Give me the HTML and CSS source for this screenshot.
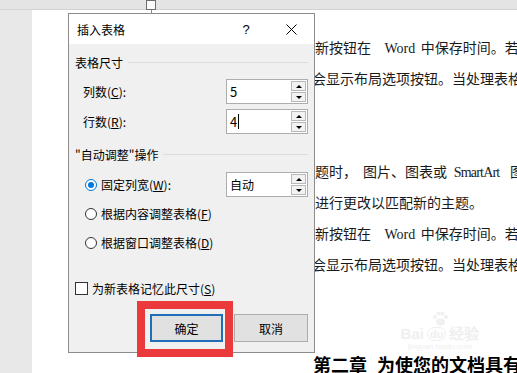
FILE: index.html
```html
<!DOCTYPE html>
<html lang="zh-CN">
<head>
<meta charset="utf-8">
<title>插入表格</title>
<link rel="stylesheet" href="styles.css">
</head>
<body>
<div class="topband"></div>
<div class="workspace">
  <div class="gutter"></div>
  <div class="page">
    <div class="doc">
      <div class="line">的新按钮在<span class="lat w1"> Word </span>中保存时间。若要更改</div>
      <div class="line shift">边会显示布局选项按钮。当处理表格时，单击</div>
      <div class="line"></div>
      <div class="line"></div>
      <div class="line">主题时<span class="wide">，</span>图片、图表或<span class="lat w2"> SmartArt </span>图形将会更改</div>
      <div class="line">会进行更改以匹配新的主题。</div>
      <div class="line">的新按钮在<span class="lat w1"> Word </span>中保存时间。若要更改</div>
      <div class="line shift">边会显示布局选项按钮。当处理表格时，单击</div>
      <div class="heading">第二章<span class="hgap"> </span>为使您的文档具有出色的外观</div>
    </div>
  </div>
</div>

<div class="handle"></div>

<div class="watermark">
  <svg class="paw" width="18" height="15" viewBox="0 0 18 15">
    <circle cx="4" cy="6" r="2" />
    <circle cx="7.5" cy="2.5" r="2" />
    <circle cx="11.5" cy="2.5" r="2" />
    <circle cx="15" cy="6" r="2" />
    <ellipse cx="9.5" cy="11" rx="4.5" ry="3.5" />
  </svg>
  <div class="wm-main"><span>Bai</span><span class="wm-du">du</span><span>经验</span></div>
  <div class="wm-url">jingyan.baidu.com</div>
</div>

<div class="dialog">
  <div class="titlebar">
    <span class="title">插入表格</span>
    <span class="help">?</span>
    <svg class="close" width="11" height="11" viewBox="0 0 11 11">
      <path d="M0.5 0.5 L10.5 10.5 M10.5 0.5 L0.5 10.5" stroke="#000" stroke-width="1" fill="none"/>
    </svg>
  </div>
  <div class="body">
    <div class="group-head first"><span>表格尺寸</span><span class="rule"></span></div>
    <div class="spin-row">
      <span>列数(<u>C</u>):</span>
      <div class="spin"><span class="val">5</span><span class="arrows"><span class="arr"><i class="up"></i></span><span class="arr"><i class="down"></i></span></span></div>
    </div>
    <div class="spin-row second">
      <span>行数(<u>R</u>):</span>
      <div class="spin"><span class="val">4<span class="caret"></span></span><span class="arrows"><span class="arr"><i class="up"></i></span><span class="arr"><i class="down"></i></span></span></div>
    </div>
    <div class="group-head second-head"><span>"自动调整"操作</span><span class="rule"></span></div>
    <div class="radios">
      <div class="radio-row">
        <span class="radio on"></span><span class="rlabel">固定列宽(<u>W</u>):</span>
        <div class="spin auto"><span class="val">自动</span><span class="arrows"><span class="arr"><i class="up"></i></span><span class="arr"><i class="down"></i></span></span></div>
      </div>
      <div class="radio-row">
        <span class="radio"></span><span class="rlabel">根据内容调整表格(<u>F</u>)</span>
      </div>
      <div class="radio-row">
        <span class="radio"></span><span class="rlabel">根据窗口调整表格(<u>D</u>)</span>
      </div>
    </div>
    <div class="check-row"><span class="check"></span><span class="clabel">为新表格记忆此尺寸(<u>S</u>)</span></div>
    <div class="buttons">
      <div class="btn ok">确定</div>
      <div class="btn cancel">取消</div>
    </div>
  </div>
</div>

<div class="highlight"></div>
</body>
</html>
```

FILE: styles.css
```css
html, body {
  margin: 0;
  padding: 0;
  width: 517px;
  height: 373px;
  overflow: hidden;
}
body {
  background: #e8e8e8;
  position: relative;
  font-family: "Noto Sans CJK SC", "Noto Sans", sans-serif;
}
.topband {
  height: 9px;
  background: #e4e4e4;
  border-bottom: 1px solid #d2d2d2;
}
.workspace {
  display: flex;
  height: 363px;
}
.gutter {
  width: 32px;
  flex: none;
  background: #e8e8e8;
}
.page {
  flex: 1;
  background: #fff;
  overflow: hidden;
  padding-top: 22px;
}
.doc {
  margin-left: 269px;
  font-size: 14px;
  color: #1a1a1a;
}
.line {
  height: 31px;
  line-height: 31px;
  white-space: nowrap;
}
.line.shift { text-indent: -3px; }
.lat { font-family: "Liberation Serif", serif; }
.w1 { margin: 0 2px 0 10px; }
.w2 { margin: 0 8px 0 4px; letter-spacing: -0.8px; }
.wide { margin-right: 6px; }
.heading {
  margin-top: 75px;
  margin-left: 12px;
  font-size: 18px;
  line-height: 18px;
  font-weight: 700;
  color: #000;
  white-space: nowrap;
}
.hgap { display: inline-block; width: 10px; }

.handle {
  position: absolute;
  left: 146px;
  top: 0;
  width: 8px;
  height: 8px;
  border: 1px solid #6e6e6e;
  background: #fafafa;
}
.handle::after {
  content: "";
  position: absolute;
  left: 4px;
  top: 9px;
  width: 1px;
  height: 4px;
  background: #8a8a8a;
}

.watermark {
  position: absolute;
  left: 388px;
  top: 311px;
  width: 104px;
  display: flex;
  flex-direction: column;
  align-items: center;
  color: #efefef;
}
.paw { fill: #f0f0f0; }
.wm-main {
  font-family: "Liberation Sans", sans-serif;
  font-size: 15px;
  line-height: 16px;
  font-weight: 700;
  display: flex;
  gap: 3px;
  align-items: center;
}
.wm-du {
  font-size: 11px;
  border: 1px solid #efefef;
  border-radius: 7px;
  padding: 0 2px;
  line-height: 12px;
}
.wm-url {
  font-family: "Liberation Sans", sans-serif;
  font-size: 8px;
  line-height: 9px;
}

.dialog {
  position: absolute;
  left: 68px;
  top: 13px;
  width: 247px;
  height: 340px;
  box-sizing: border-box;
  border: 1px solid #8c8c8c;
  background: #f0f0f0;
  display: flex;
  flex-direction: column;
  font-size: 12px;
  color: #000;
}
.titlebar {
  height: 30px;
  flex: none;
  background: #fff;
  display: flex;
  align-items: center;
  padding-left: 8px;
  padding-right: 17px;
}
.title { flex: 1; font-size: 12px; }
.help {
  width: 14px;
  text-align: center;
  font-family: "Liberation Sans", sans-serif;
  font-size: 13px;
  margin-right: 33px;
}
.close { display: block; }
.body {
  display: flex;
  flex-direction: column;
  padding: 0 6px;
}
.group-head {
  height: 14px;
  display: flex;
  align-items: center;
  white-space: nowrap;
}
.group-head.first { margin-top: 11px; }
.group-head.second-head { margin-top: 13px; }
.rule {
  flex: 1;
  height: 1px;
  background: #dcdcdc;
  margin-left: 5px;
}
.spin-row {
  margin-top: 10px;
  height: 25px;
  display: flex;
  align-items: center;
  justify-content: space-between;
  padding-left: 8px;
}
.spin-row.second { margin-top: 5px; }
.spin {
  width: 82px;
  height: 25px;
  box-sizing: border-box;
  border: 1px solid #adadad;
  background: #fff;
  display: flex;
}
.val {
  flex: 1;
  padding-left: 3px;
  line-height: 23px;
  font-size: 13px;
  display: flex;
  align-items: center;
}
.auto .val { font-size: 12px; }
.caret {
  display: inline-block;
  width: 1px;
  height: 15px;
  background: #000;
  margin-left: 1px;
}
.arrows {
  width: 15px;
  display: flex;
  flex-direction: column;
  gap: 1px;
  padding: 1px 1px 1px 0;
}
.arr {
  flex: 1;
  border: 1px solid #b8b8b8;
  background: #f2f2f2;
  display: flex;
  align-items: center;
  justify-content: center;
}
.up, .down {
  width: 0;
  height: 0;
  border-left: 3px solid transparent;
  border-right: 3px solid transparent;
}
.up { border-bottom: 3px solid #000; }
.down { border-top: 3px solid #000; }
.radios {
  margin-top: 9px;
  display: flex;
  flex-direction: column;
}
.radio-row {
  height: 29px;
  display: flex;
  align-items: center;
  padding-left: 10px;
}
.radio {
  width: 12px;
  height: 12px;
  box-sizing: border-box;
  border: 1px solid #333;
  border-radius: 50%;
  background: #fff;
  flex: none;
  position: relative;
}
.radio.on { border-color: #0078d7; }
.radio.on::after {
  content: "";
  position: absolute;
  left: 2px;
  top: 2px;
  width: 6px;
  height: 6px;
  border-radius: 50%;
  background: #0078d7;
}
.rlabel { margin-left: 4px; flex: 1; white-space: nowrap; }
.check-row {
  margin-top: 24px;
  height: 14px;
  display: flex;
  align-items: center;
}
.check {
  width: 13px;
  height: 13px;
  box-sizing: border-box;
  border: 1px solid #333;
  background: #fff;
  flex: none;
}
.clabel { margin-left: 4px; white-space: nowrap; }
.buttons {
  margin-top: 19px;
  height: 28px;
  display: flex;
  justify-content: flex-end;
  gap: 11px;
}
.btn {
  height: 28px;
  box-sizing: border-box;
  background: #e1e1e1;
  display: flex;
  align-items: center;
  justify-content: center;
  font-size: 12px;
}
.btn.ok { width: 73px; border: 2px solid #1f6fb8; }
.btn.cancel { width: 74px; border: 1px solid #adadad; }

.highlight {
  position: absolute;
  left: 137px;
  top: 301px;
  width: 96px;
  height: 56px;
  box-sizing: border-box;
  border: 8px solid #ea3a3c;
}
```
